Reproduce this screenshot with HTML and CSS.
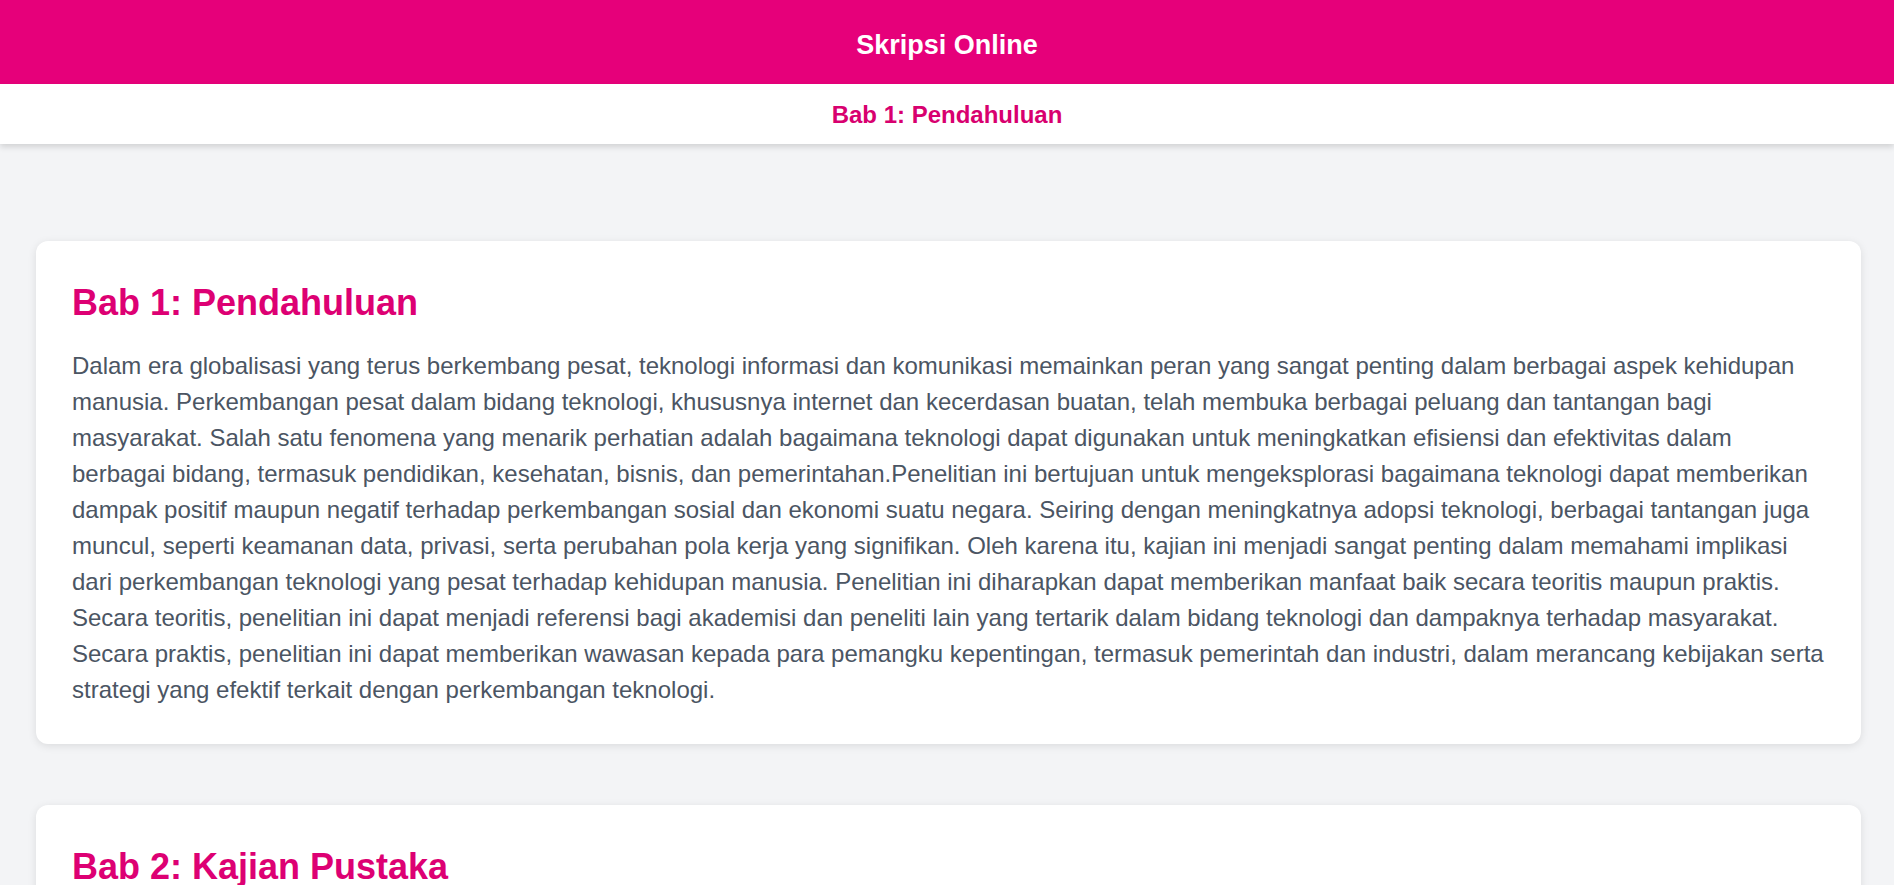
FILE: index.html
```html
<!DOCTYPE html>
<html lang="id">
<head>
<meta charset="utf-8">
<title>Skripsi Online</title>
<link rel="stylesheet" href="styles.css">
</head>
<body>
<header class="topbar">
  <h1 class="site-title">Skripsi Online</h1>
</header>
<nav class="subnav">
  <span class="subnav-item">Bab 1: Pendahuluan</span>
</nav>
<main class="content">
  <section class="card">
    <h2 class="card-title">Bab 1: Pendahuluan</h2>
    <p class="card-text">Dalam era globalisasi yang terus berkembang pesat, teknologi informasi dan komunikasi memainkan peran yang sangat penting dalam berbagai aspek kehidupan manusia. Perkembangan pesat dalam bidang teknologi, khususnya internet dan kecerdasan buatan, telah membuka berbagai peluang dan tantangan bagi masyarakat. Salah satu fenomena yang menarik perhatian adalah bagaimana teknologi dapat digunakan untuk meningkatkan efisiensi dan efektivitas dalam berbagai bidang, termasuk pendidikan, kesehatan, bisnis, dan pemerintahan.Penelitian ini bertujuan untuk mengeksplorasi bagaimana teknologi dapat memberikan dampak positif maupun negatif terhadap perkembangan sosial dan ekonomi suatu negara. Seiring dengan meningkatnya adopsi teknologi, berbagai tantangan juga muncul, seperti keamanan data, privasi, serta perubahan pola kerja yang signifikan. Oleh karena itu, kajian ini menjadi sangat penting dalam memahami implikasi dari perkembangan teknologi yang pesat terhadap kehidupan manusia. Penelitian ini diharapkan dapat memberikan manfaat baik secara teoritis maupun praktis. Secara teoritis, penelitian ini dapat menjadi referensi bagi akademisi dan peneliti lain yang tertarik dalam bidang teknologi dan dampaknya terhadap masyarakat. Secara praktis, penelitian ini dapat memberikan wawasan kepada para pemangku kepentingan, termasuk pemerintah dan industri, dalam merancang kebijakan serta strategi yang efektif terkait dengan perkembangan teknologi.</p>
  </section>
  <section class="card">
    <h2 class="card-title">Bab 2: Kajian Pustaka</h2>
    <p class="card-text">Kajian pustaka ini membahas berbagai teori dan penelitian terdahulu yang berkaitan dengan perkembangan teknologi informasi dan komunikasi serta dampaknya terhadap kehidupan sosial dan ekonomi masyarakat.</p>
  </section>
</main>
</body>
</html>
```

FILE: styles.css
```css
* {
  box-sizing: border-box;
}

html, body {
  margin: 0;
  padding: 0;
}

body {
  background: #f3f4f6;
  font-family: "Liberation Sans", Arial, Helvetica, sans-serif;
}

.topbar {
  background: #e6007a;
  height: 84px;
  display: flex;
  align-items: center;
  justify-content: center;
  padding-top: 8px;
}

.site-title {
  margin: 0;
  color: #ffffff;
  font-size: 27px;
  font-weight: 700;
  line-height: 1.15;
}

.subnav {
  position: relative;
  background: #ffffff;
  height: 60px;
  display: flex;
  align-items: center;
  justify-content: center;
  box-shadow: 0 3px 6px rgba(0, 0, 0, 0.14);
  padding-top: 1px;
}

.subnav-item {
  color: #d8006f;
  font-size: 24px;
  font-weight: 700;
  line-height: 1.15;
}

.content {
  padding: 97px 33px 40px 36px;
  display: flex;
  flex-direction: column;
  gap: 61px;
}

.card {
  background: #ffffff;
  border-radius: 12px;
  box-shadow: 0 2px 8px rgba(0, 0, 0, 0.1);
  padding: 40px 36px 36px 36px;
}

.card-title {
  margin: 0 0 24px 0;
  color: #dd0073;
  font-size: 36px;
  font-weight: 700;
  line-height: 43px;
}

.card-text {
  margin: 0;
  color: #4b5563;
  font-size: 24px;
  line-height: 36px;
}
```
